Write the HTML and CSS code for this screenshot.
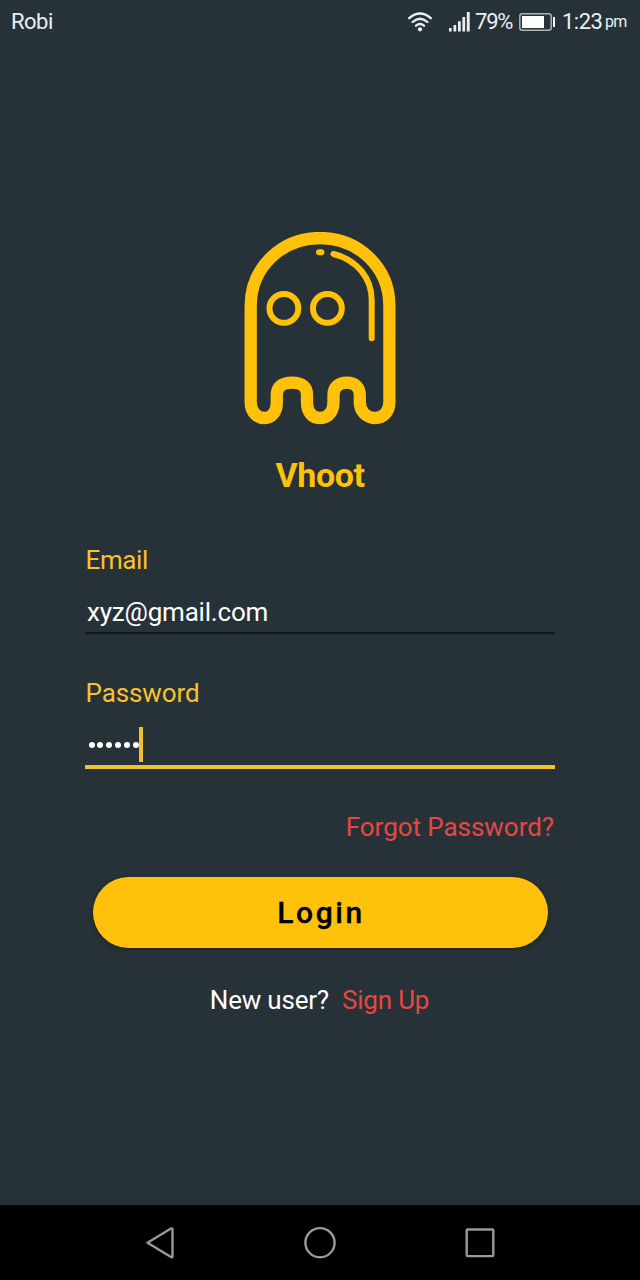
FILE: index.html
```html
<!DOCTYPE html>
<html lang="en">
<head>
<meta charset="utf-8">
<title>Vhoot</title>
<link rel="stylesheet" href="styles.css">
</head>
<body>
<div class="screen">
  <header class="status">
    <span class="carrier">Robi</span>
    <svg class="wifi" width="26" height="22" viewBox="0 0 26 22" fill="none" stroke="#e9f0f3" stroke-width="2.3" stroke-linecap="round"><path d="M2.200 7.200Q13-2.300 23.800 7.200M5.600 11Q13 4.600 20.400 11M9 14.700Q13 11.300 17 14.700"/><circle cx="13" cy="18.300" r="2.100" fill="#e9f0f3" stroke="none"/></svg>
    <svg class="signal" width="22" height="20" viewBox="0 0 22 20" fill="#e9f0f3"><path d="M0 16h2.600v3.500H0zM4.500 13h2.700v6.500H4.500zM9 9.300h2.700v10.200H9zM13.400 5h2.700v14.500h-2.700zM17.800 0h2.900v19.500h-2.900z"/></svg>
    <span class="percent">79%</span>
    <svg class="battery" width="37" height="18" viewBox="0 0 37 18"><rect x=".8" y=".8" width="31.400" height="16.400" rx="2.500" fill="none" stroke="#a9b1b5" stroke-width="1.500"/><path d="M3 3h22v12H3zM34 4h2v10h-2z" fill="#fff"/></svg>
    <span class="time">1:23</span><span class="ampm">pm</span>
  </header>
  <main class="login">
    <svg class="ghost" width="152" height="193" viewBox="244 232 152 193" fill="none" stroke="#ffc10a" stroke-linecap="round">
      <path stroke-width="12.300" d="M250.700 306C250.700 267 282 238 320 238S389.400 267 389.400 306V402C389.400 412 383 418 375 418C366 418 359.800 411 359.800 402V395C359.800 387 355 382.700 347 382.700C338.500 382.700 333.500 387 333.500 395V402C333.500 412 328 418 320 418C312 418 307 412 307 402V395C307 387 302 382.700 292 382.700C282 382.700 276.800 387 276.800 395V403C276.800 412 271.500 418 264.500 418C257 418 250.700 412 250.700 402Z"/>
      <g stroke-width="6"><circle cx="283.900" cy="308.400" r="14.400"/><circle cx="327.400" cy="308.400" r="14.400"/><path d="M319 252.300H321.400M333.500 254C357 260 371.700 278 371.700 300V338.200"/></g>
    </svg>
    <h1 class="brand">Vhoot</h1>
    <div class="label email-label">Email</div>
    <div class="field email">xyz@gmail.com</div>
    <div class="label password-label">Password</div>
    <div class="field password"><span class="dots"><i></i><i></i><i></i><i></i><i></i><i></i></span><span class="caret"></span></div>
    <a class="forgot">Forgot Password?</a>
    <button class="submit">Login</button>
    <p class="signup"><span>New user?</span><a>Sign Up</a></p>
  </main>
  <nav class="nav">
    <svg width="400" height="75" viewBox="120 1205 400 75" fill="none" stroke="#999" stroke-width="2.400" stroke-linejoin="round"><path d="M147.500 1242.700L171 1228.500Q172.500 1228 172.500 1229.500V1256Q172.500 1258 171 1257Z"/><circle cx="320" cy="1242.700" r="14.600"/><rect x="466.700" y="1229.500" width="26.600" height="26.600" rx="1"/></svg>
  </nav>
</div>
</body>
</html>
```
FILE: styles.css
```css
* { box-sizing: border-box; }
body { margin: 0; background: #273238; font-family: Roboto, sans-serif; }
.screen { width: 640px; height: 1280px; display: flex; flex-direction: column; background: #273238; }
.status { height: 44px; display: flex; align-items: center; padding: 0 13px 0 11px; color: #e9f0f3; font-size: 22px; line-height: 44px; }
.carrier { margin-right: auto; letter-spacing: -.5px; }
.wifi { margin-right: 16px; }
.signal { margin-right: 4px; }
.percent { width: 40px; margin-right: 4px; letter-spacing: -1.200px; }
.battery { margin-right: 6px; }
.time { width: 43px; letter-spacing: -.5px; }
.ampm { width: 22px; font-size: 16px; line-height: 48px; letter-spacing: -.7px; }
.login { flex: 1; display: flex; flex-direction: column; padding: 188px 85px 0; }
.ghost { align-self: center; }
.brand { margin: 30px 0 0; font-size: 34px; line-height: 40px; text-align: center; color: #ffc10a; letter-spacing: -.4px; }
.label { padding-left: .5px; font-size: 26px; line-height: 30px; color: #fbc02d; letter-spacing: -.1px; }
.email-label { margin-top: 50px; letter-spacing: -.4px; }
.field { width: 470px; color: #fff; font-size: 26px; }
.email { height: 44px; margin-top: 15px; padding: 7px 2px 0; line-height: 30px; letter-spacing: -.2px; border-bottom: 2px solid #11191e; }
.password-label { margin-top: 44px; }
.password { display: flex; height: 45px; margin-top: 16px; padding: 3px 3.500px 0; border-bottom: 4px solid #f1c12d; }
.dots { display: flex; gap: 2.900px; padding-top: 15px; }
.dots i { width: 6px; height: 6px; border-radius: 50%; background: #fff; }
.caret { width: 4px; height: 35px; margin-left: .5px; background: #f1c12d; }
.forgot { margin: 43px 1px 0 0; align-self: flex-end; font-size: 26px; line-height: 30px; letter-spacing: -.05px; color: #e54840; }
.submit { width: 455px; height: 71px; margin: 35px 0 0; align-self: center; border: 0; border-radius: 36px; background: #ffc10a; box-shadow: 0 1px 4px #0006; color: #000; font: 500 30px/71px Roboto, sans-serif; letter-spacing: 2.600px; padding: 0 0 0 2px; -webkit-text-stroke: .3px #000; }
.signup { display: flex; justify-content: center; gap: 13px; margin: 37px 1px 0 0; font-size: 26px; line-height: 30px; letter-spacing: -.2px; color: #fff; }
.signup a { color: #e54840; }
.nav { height: 75px; display: flex; justify-content: center; background: #000; }
```
